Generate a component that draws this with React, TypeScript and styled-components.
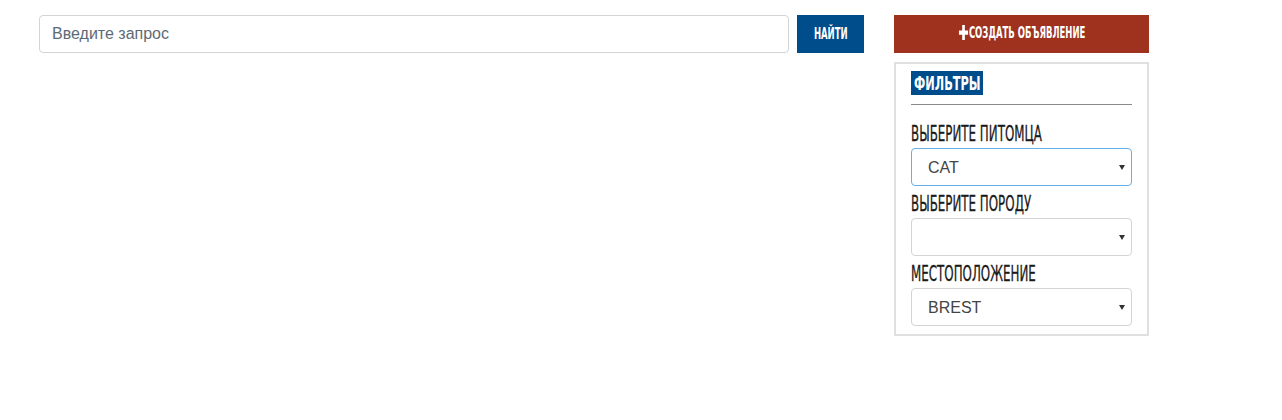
import React from "react";
import styled, { createGlobalStyle } from "styled-components";

const GlobalStyle = createGlobalStyle`
  body {
    margin: 0;
    background: #fff;
    font-family: "Liberation Sans", Arial, sans-serif;
  }
`;

// no Oswald offline: squeeze a condensed face horizontally instead
const condensed = `"DejaVu Sans Condensed", "Liberation Sans", sans-serif`;

const Page = styled.div`
  display: flex;
  align-items: flex-start;
  gap: 30px;
  padding: 15px 0 0 39px;
`;

const SearchBar = styled.form`
  display: flex;
  gap: 8px;
  width: 825px;
`;

const SearchInput = styled.input`
  flex: 1;
  height: 38px;
  box-sizing: border-box;
  border: 1px solid #d4d4d4;
  border-radius: 4px;
  padding: 0 12px;
  font-family: "Liberation Sans", Arial, sans-serif;
  font-size: 16px;
  color: #555;
  outline: none;

  &::placeholder {
    color: #5d6a75;
  }
`;

const Squeeze = styled.span<{ $origin?: string; $scale?: number }>`
  display: inline-block;
  white-space: nowrap;
  transform: scaleX(${({ $scale }) => $scale ?? 0.63});
  transform-origin: ${({ $origin }) => $origin || "center"};
`;

const ActionButton = styled.button<{ $bg: string; $wide?: boolean }>`
  height: 38px;
  width: ${({ $wide }) => ($wide ? "255px" : "67px")};
  border: none;
  background: ${({ $bg }) => $bg};
  color: #fff;
  font-family: ${condensed};
  font-weight: 700;
  font-size: 15px;
  text-transform: uppercase;
  display: flex;
  align-items: center;
  justify-content: center;
  padding: 0;
  overflow: hidden;
  cursor: pointer;
`;

const ButtonInner = styled.span`
  display: inline-flex;
  align-items: center;
  gap: 1px;
  margin-left: 2px;
`;

const Sidebar = styled.aside`
  display: flex;
  flex-direction: column;
  gap: 9px;
  width: 255px;
`;

const FilterPanel = styled.div`
  border: 2px solid #e0e0e0;
  padding: 7px 15px 8px 15px;
  display: flex;
  flex-direction: column;
`;

const PanelTitle = styled.h3`
  margin: 0;
  align-self: flex-start;
  height: 24px;
  width: 72px;
  background: #004d8c;
  color: #fff;
  font-family: ${condensed};
  font-weight: 700;
  font-size: 20px;
  line-height: 24px;
  text-transform: uppercase;
  padding: 0 0 0 3px;
  box-sizing: border-box;
  overflow: hidden;
`;

const Divider = styled.hr`
  margin: 9px 0 0 0;
  border: none;
  border-top: 1px solid #8a8a8a;
`;

const FieldLabel = styled.label<{ $first?: boolean }>`
  display: block;
  margin-top: ${({ $first }) => ($first ? "18px" : "7px")};
  margin-bottom: 3px;
  font-family: ${condensed};
  font-size: 22px;
  line-height: 22px;
  color: #1a1a1a;
  -webkit-text-stroke: 0.3px #1a1a1a;
  text-transform: uppercase;
`;

const SelectWrap = styled.div`
  position: relative;

  &::after {
    content: "";
    position: absolute;
    right: 7px;
    top: 17px;
    border-left: 3px solid transparent;
    border-right: 3px solid transparent;
    border-top: 5px solid #333;
    pointer-events: none;
  }
`;

const Select = styled.select<{ $focused?: boolean }>`
  appearance: none;
  width: 100%;
  height: 38px;
  box-sizing: border-box;
  border: 1px solid ${({ $focused }) => ($focused ? "#66afe9" : "#d4d4d4")};
  border-radius: 4px;
  background: #fff;
  padding: 0 16px;
  font-family: "Liberation Sans", Arial, sans-serif;
  font-size: 16px;
  color: #444;
  outline: none;
`;

const FILTERS = [
  { label: "Выберите питомца", value: "CAT", options: ["CAT", "DOG"], focused: true },
  { label: "Выберите породу", value: "", options: [""], focused: false },
  { label: "Местоположение", value: "BREST", options: ["BREST", "MINSK"], focused: false },
];

const App: React.FC = () => (
  <>
    <GlobalStyle />
    <Page>
      <SearchBar onSubmit={e => e.preventDefault()}>
        <SearchInput placeholder="Введите запрос" />
        <ActionButton $bg="#004d8c">
          <Squeeze>Найти</Squeeze>
        </ActionButton>
      </SearchBar>
      <Sidebar>
        <ActionButton $bg="#9e321e" $wide>
          <Squeeze>
            <ButtonInner>
              <svg width="15" height="15" viewBox="0 0 12 12">
                <path d="M4.3 0h3.4v4.3H12v3.4H7.7V12H4.3V7.7H0V4.3h4.3z" fill="#fff" />
              </svg>
              Создать объявление
            </ButtonInner>
          </Squeeze>
        </ActionButton>
        <FilterPanel>
          <PanelTitle>
            <Squeeze $origin="left">Фильтры</Squeeze>
          </PanelTitle>
          <Divider />
          {FILTERS.map((f, i) => (
            <div key={f.label}>
              <FieldLabel $first={i === 0}>
                <Squeeze $origin="left" $scale={0.6}>{f.label}</Squeeze>
              </FieldLabel>
              <SelectWrap>
                <Select $focused={f.focused} defaultValue={f.value}>
                  {f.options.map(o => (
                    <option key={o} value={o}>{o}</option>
                  ))}
                </Select>
              </SelectWrap>
            </div>
          ))}
        </FilterPanel>
      </Sidebar>
    </Page>
  </>
);

export default App;
